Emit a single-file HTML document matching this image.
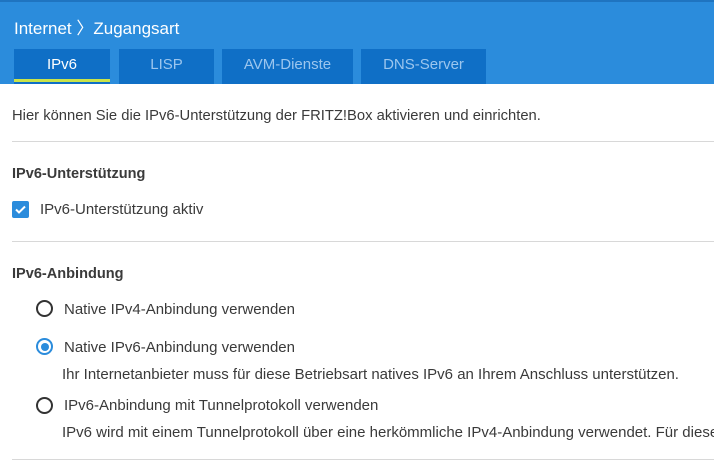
<!DOCTYPE html>
<html><head><meta charset="utf-8"><style>
*{margin:0;padding:0;box-sizing:border-box}
body{width:714px;height:474px;overflow:hidden;background:#fff;font-family:"Liberation Sans",sans-serif;color:#3a3a3a;position:relative}
.hdr{position:absolute;left:0;top:0;width:714px;height:84px;background:#2b8cdc;border-top:2px solid #1f74c0}
.t{position:absolute;white-space:nowrap}
.tab{position:absolute;top:49px;height:35px;background:#0f6fc6;color:#9cc6ee;font-size:15px;text-align:center;line-height:32px}
.hr{position:absolute;left:12px;right:0;height:1px;background:#d8d8d8}
.radio{position:absolute;width:17px;height:17px;border:2px solid #333;border-radius:50%}
.s{font-size:15px;transform-origin:0 0}
</style></head><body>
<div class="hdr"></div>
<div class="t" style="left:14px;top:14px;color:#fff;font-size:17px">Internet 〉Zugangsart</div>
<div class="tab" style="left:14px;width:96px;color:#fff">IPv6<div style="position:absolute;left:0;right:0;bottom:2px;height:3px;background:#c9e34a"></div></div>
<div class="tab" style="left:119px;width:95px">LISP</div>
<div class="tab" style="left:222px;width:131px">AVM-Dienste</div>
<div class="tab" style="left:361px;width:125px">DNS-Server</div>

<div class="t s" style="left:12px;top:107px;transform:scaleX(0.985)">Hier können Sie die IPv6-Unterstützung der FRITZ!Box aktivieren und einrichten.</div>
<div class="hr" style="top:141px"></div>
<div class="t s" style="left:12px;top:165px;font-weight:bold;transform:scaleX(0.97)">IPv6-Unterstützung</div>
<div style="position:absolute;left:12px;top:201px;width:17px;height:17px;background:#2b8cdc;border-radius:2px"><svg width="17" height="17"><path d="M4 8.5l3 3 6-6" stroke="#fff" stroke-width="2" fill="none"/></svg></div>
<div class="t s" style="left:40px;top:201px">IPv6-Unterstützung aktiv</div>
<div class="hr" style="top:241px"></div>
<div class="t s" style="left:12px;top:265px;font-weight:bold;transform:scaleX(0.97)">IPv6-Anbindung</div>
<div class="radio" style="left:36px;top:300px"></div>
<div class="t s" style="left:64px;top:301px">Native IPv4-Anbindung verwenden</div>
<div class="radio" style="left:36px;top:338px;border-color:#2b8cdc"><div style="position:absolute;left:2.5px;top:2.5px;width:8px;height:8px;border-radius:50%;background:#2b8cdc"></div></div>
<div class="t s" style="left:64px;top:339px">Native IPv6-Anbindung verwenden</div>
<div class="t s" style="left:62px;top:366px">Ihr Internetanbieter muss für diese Betriebsart natives IPv6 an Ihrem Anschluss unterstützen.</div>
<div class="radio" style="left:36px;top:397px"></div>
<div class="t s" style="left:64px;top:397px">IPv6-Anbindung mit Tunnelprotokoll verwenden</div>
<div class="t s" style="left:62px;top:424px">IPv6 wird mit einem Tunnelprotokoll über eine herkömmliche IPv4-Anbindung verwendet. Für diese</div>
<div class="hr" style="top:459px"></div>
</body></html>
